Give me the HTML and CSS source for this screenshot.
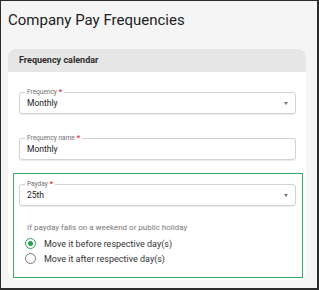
FILE: index.html
```html
<!DOCTYPE html>
<html lang="en">
<head>
  <meta charset="UTF-8" />
  <title>Company Pay Frequencies</title>
  <link rel="stylesheet" href="styles.css">
</head>
<body>
<div class="frame">
  <h1 class="page-title">Company Pay Frequencies</h1>

  <section class="card">
    <div class="card-head">Frequency calendar</div>
    <div class="card-body">
      <div class="field select">
        <span class="field-label">Frequency <b>*</b></span>
        <span class="field-value">Monthly</span>
        <span class="caret"></span>
      </div>

      <div class="field">
        <span class="field-label">Frequency name <b>*</b></span>
        <span class="field-value">Monthly</span>
      </div>

      <div class="payday-box">
        <div class="field select">
          <span class="field-label">Payday <b>*</b></span>
          <span class="field-value">25th</span>
          <span class="caret"></span>
        </div>
        <p class="hint">If payday falls on a weekend or public holiday</p>
        <label class="radio-row">
          <span class="radio checked"></span>
          Move it before respective day(s)
        </label>
        <label class="radio-row">
          <span class="radio"></span>
          Move it after respective day(s)
        </label>
      </div>
    </div>
  </section>
</div>
</body>
</html>
```

FILE: styles.css
```css
html, body {
  margin: 0;
  font-family: Roboto, 'Liberation Sans', sans-serif;
  background: #fff;
}
.frame {
  box-sizing: border-box;
  width: 319px;
  height: 290px;
  background: #f5f5f5;
  border-style: solid;
  border-color: #2b2b2b;
  border-width: 1px 2px 2px 1px;
  padding: 10px 11px 0 7px;
}
.page-title {
  margin: 0 0 20px;
  font-size: 15px;
  line-height: 18px;
  font-weight: 400;
  color: #222;
}
.card {
  background: #fff;
  border-radius: 8px;
  overflow: hidden;
}
.card-head {
  height: 23px;
  line-height: 23px;
  padding-left: 11px;
  background: #e6e6e6;
  font-size: 9px;
  font-weight: 700;
  color: #2f2f2f;
}
.card-body {
  padding: 20px 10px 2px 11px;
}
.field {
  position: relative;
  box-sizing: border-box;
  height: 22px;
  border: 1px solid #d2d2d2;
  border-radius: 3px;
  box-shadow: 0 1px 1px rgba(0,0,0,0.08);
  display: flex;
  align-items: center;
  padding-left: 7px;
  margin-bottom: 24px;
}
.field-label {
  position: absolute;
  top: -5px;
  left: 5px;
  padding: 0 2px;
  background: #fff;
  font-size: 6.5px;
  line-height: 8px;
  color: #707070;
}
.field-label b {
  color: #e53935;
  font-weight: 700;
  font-size: 8px;
}
.field-value {
  font-size: 8.5px;
  color: #222;
}
.caret {
  position: absolute;
  right: 7px;
  top: 9px;
  border-left: 2.5px solid transparent;
  border-right: 2.5px solid transparent;
  border-top: 3px solid #777;
}
.payday-box {
  margin: -11px -7px 0 -6px;
  border: 1px solid #3fa967;
  padding: 10px 6px 11px 5px;
}
.payday-box .field {
  margin-bottom: 0;
}
.hint {
  margin: 17px 0 3px 8px;
  font-size: 8px;
  line-height: 10px;
  color: #777;
}
.radio-row {
  display: flex;
  align-items: center;
  gap: 8px;
  height: 15px;
  padding-left: 6px;
  font-size: 9px;
  color: #333;
}
.radio {
  box-sizing: border-box;
  width: 11px;
  height: 11px;
  border: 1.5px solid #777;
  border-radius: 50%;
  display: flex;
  align-items: center;
  justify-content: center;
}
.radio.checked {
  border-color: #2e9c57;
}
.radio.checked::after {
  content: '';
  width: 5px;
  height: 5px;
  border-radius: 50%;
  background: #2e9c57;
}
```
